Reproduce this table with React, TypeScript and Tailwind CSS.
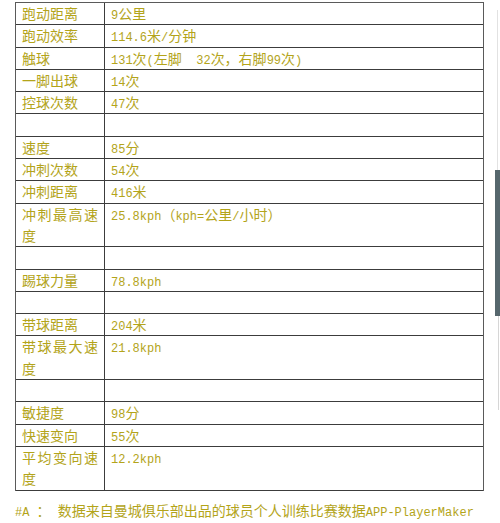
import React from 'react'

type Row = { label?: string; value?: string }

const rows: Row[] = [
  { label: '跑动距离', value: '9公里' },
  { label: '跑动效率', value: '114.6米/分钟' },
  { label: '触球', value: '131次(左脚\u00a0\u00a032次，右脚99次)' },
  { label: '一脚出球', value: '14次' },
  { label: '控球次数', value: '47次' },
  {},
  { label: '速度', value: '85分' },
  { label: '冲刺次数', value: '54次' },
  { label: '冲刺距离', value: '416米' },
  { label: '冲刺最高速度', value: '25.8kph（kph=公里/小时）' },
  {},
  { label: '踢球力量', value: '78.8kph' },
  {},
  { label: '带球距离', value: '204米' },
  { label: '带球最大速度', value: '21.8kph' },
  {},
  { label: '敏捷度', value: '98分' },
  { label: '快速变向', value: '55次' },
  { label: '平均变向速度', value: '12.2kph' },
]

// half-width runs get a narrow mono face, like the song-style font in the shot
function Mixed({ text }: { text: string }) {
  const parts = text.split(/([\x20-\x7e\u00a0]+)/)
  return (
    <>
      {parts.map((p, i) =>
        /^[\x20-\x7e\u00a0]+$/.test(p) ? (
          <span key={i} className="font-['Liberation_Mono',monospace] text-[12px] leading-none">
            {p}
          </span>
        ) : (
          <span key={i}>{p}</span>
        )
      )}
    </>
  )
}

export default function App() {
  return (
    <div className="relative w-[500px] h-[523px] overflow-hidden bg-white font-['Noto_Sans_CJK_SC',sans-serif] text-[14px] text-[#b3a41a]">
      <div className="pt-[2px] pl-[15px]">
        <div className="w-[469px] border-t border-l border-r border-[#5a5a5a]">
          {rows.map((r, i) => (
            <div key={i} className="flex border-b border-[#3c3c3c] leading-[21.3px]">
              <div className="w-[89px] shrink-0 border-r border-[#3c3c3c] px-[6px] text-justify">
                {r.label ?? '\u00a0'}
              </div>
              <div className="flex-1 px-[6px] whitespace-nowrap">
                {r.value ? <Mixed text={r.value} /> : '\u00a0'}
              </div>
            </div>
          ))}
        </div>
        <div className="mt-[9px] leading-[20px] whitespace-nowrap">
          <Mixed text={'#A\u00a0'} />：<Mixed text={'\u00a0'} />数据来自曼城俱乐部出品的球员个人训练比赛数据
          <Mixed text="APP-PlayerMaker" />
        </div>
      </div>

      {/* scrollbar overlay on the right edge */}
      <div className="absolute right-[2px] top-[10px] h-[160px] w-px bg-[#e2e2e2]" />
      <div className="absolute right-0 top-[170px] h-[146px] w-[5px] bg-[#56676d]" />
      <div className="absolute right-px top-[316px] h-[94px] w-px bg-[#d6d6d6]" />
    </div>
  )
}
